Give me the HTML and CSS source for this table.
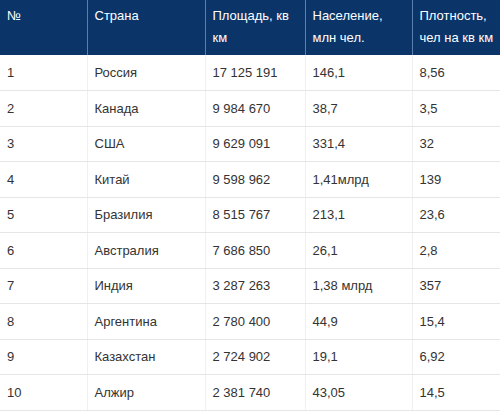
FILE: index.html
```html
<!DOCTYPE html>
<html lang="ru">
<head>
<meta charset="utf-8">
<link rel="stylesheet" href="styles.css">
</head>
<body>
<table class="countries">
  <colgroup>
    <col class="c1"><col class="c2"><col class="c3"><col class="c4"><col class="c5">
  </colgroup>
  <thead>
    <tr>
      <th>№</th>
      <th>Страна</th>
      <th>Площадь, кв км</th>
      <th>Население, млн чел.</th>
      <th>Плотность, чел на кв км</th>
    </tr>
  </thead>
  <tbody>
    <tr><td>1</td><td>Россия</td><td>17 125 191</td><td>146,1</td><td>8,56</td></tr>
    <tr><td>2</td><td>Канада</td><td>9 984 670</td><td>38,7</td><td>3,5</td></tr>
    <tr><td>3</td><td>США</td><td>9 629 091</td><td>331,4</td><td>32</td></tr>
    <tr><td>4</td><td>Китай</td><td>9 598 962</td><td>1,41млрд</td><td>139</td></tr>
    <tr><td>5</td><td>Бразилия</td><td>8 515 767</td><td>213,1</td><td>23,6</td></tr>
    <tr><td>6</td><td>Австралия</td><td>7 686 850</td><td>26,1</td><td>2,8</td></tr>
    <tr><td>7</td><td>Индия</td><td>3 287 263</td><td>1,38 млрд</td><td>357</td></tr>
    <tr><td>8</td><td>Аргентина</td><td>2 780 400</td><td>44,9</td><td>15,4</td></tr>
    <tr><td>9</td><td>Казахстан</td><td>2 724 902</td><td>19,1</td><td>6,92</td></tr>
    <tr><td>10</td><td>Алжир</td><td>2 381 740</td><td>43,05</td><td>14,5</td></tr>
  </tbody>
</table>
</body>
</html>
```
FILE: styles.css
```css
html, body {
  margin: 0;
  padding: 0;
  background: #ffffff;
}
body {
  font-family: "Liberation Sans", Arial, sans-serif;
  font-size: 13px;
  color: #333333;
}
.countries {
  width: 500px;
  table-layout: fixed;
  border-collapse: collapse;
}
.c1 { width: 87px; }
.c2 { width: 118px; }
.c3 { width: 100px; }
.c4 { width: 107px; }
.c5 { width: 88px; }
.countries th {
  background: #0b3569;
  color: #ffffff;
  font-weight: normal;
  text-align: left;
  vertical-align: top;
  line-height: 22px;
  height: 55px;
  box-sizing: border-box;
  padding: 5px 4px 6px 7px;
  border-left: 1px solid #5b7fae;
}
.countries th:first-child {
  border-left: none;
}
.countries td {
  height: 35.5px;
  box-sizing: border-box;
  padding: 0 4px 0 7px;
  vertical-align: middle;
  border-bottom: 1px solid #e6e6e6;
  border-left: 1px solid #f0f0f0;
}
.countries td:first-child {
  border-left: none;
}
```
